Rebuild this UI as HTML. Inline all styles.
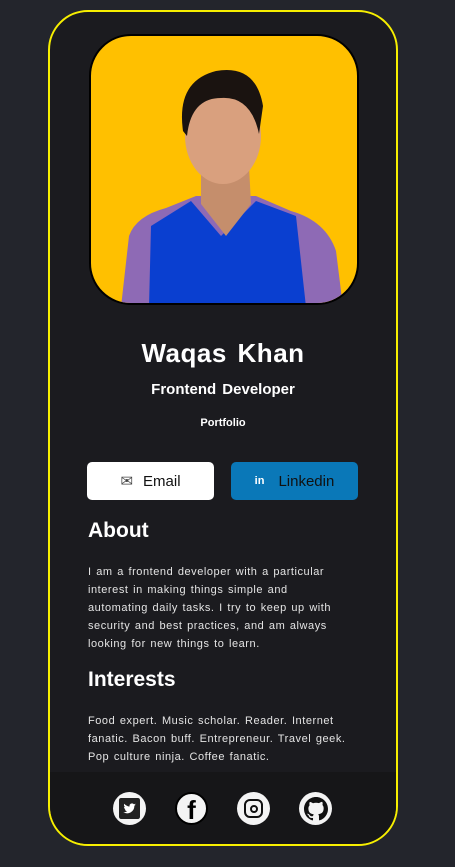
<!DOCTYPE html>
<html><head><meta charset="utf-8"><style>
*{margin:0;padding:0;box-sizing:border-box}
body{width:455px;height:867px;background:#23252c;font-family:"Liberation Sans","DejaVu Sans",sans-serif;position:relative;overflow:hidden}
.card{position:absolute;left:48px;top:10px;width:350px;height:836px;border:2px solid #f7ef00;border-radius:40px;background:#1b1b1f;overflow:hidden}
.foot{position:absolute;left:0;right:0;bottom:0;height:72px;background:#161618}
.photo{position:absolute;left:39px;top:22px;width:270px;height:271px;background:#ffc000;border:2px solid #000;border-radius:42px;overflow:hidden}
.t{position:absolute;left:0;width:346px;text-align:center;color:#fff;font-weight:bold}
.btn{position:absolute;top:450px;width:127px;height:38px;border-radius:5px;font-size:15px;display:flex;align-items:center;justify-content:center;color:#111}
h2{position:absolute;left:38px;color:#fff;font-size:21px;font-weight:bold}
p{position:absolute;left:38px;width:262px;color:#e4e4e4;font-size:11px;line-height:18px;letter-spacing:.55px;word-spacing:1px}
.ic{position:absolute;top:780px;width:33px;height:33px;border-radius:50%;background:#f4f4f4;display:flex;align-items:center;justify-content:center}
</style></head><body>
<div class="card">
<div class="photo">
<svg width="270" height="271" viewBox="0 0 270 271">
<path d="M30 271 L38 200 Q45 180 75 172 L105 160 L165 160 L200 175 Q235 185 245 215 L252 271Z" fill="#8e6ab5"/>
<path d="M58 271 L60 190 L100 165 L130 200 L165 165 L205 180 L215 271Z" fill="#0a3fd0"/>
<path d="M110 130 L110 168 L135 200 L160 168 L158 130Z" fill="#c58e6c"/>
<ellipse cx="132" cy="100" rx="38" ry="48" fill="#d9a07e"/>
<path d="M92 95 Q85 45 125 35 Q165 28 172 70 L168 98 Q160 60 130 62 Q100 62 96 100Z" fill="#1a1310"/>
</svg>
</div>
<div class="t" style="top:326px;font-size:26px;letter-spacing:.5px;word-spacing:3px">Waqas Khan</div>
<div class="t" style="top:369px;font-size:15px;word-spacing:2px">Frontend Developer</div>
<div class="t" style="top:405px;font-size:11px">Portfolio</div>
<div class="btn" style="left:37px;background:#fff"><span style="font-size:15px;margin-right:10px;color:#444">✉</span>Email</div>
<div class="btn" style="left:181px;background:#0a78b8"><b style="font-size:11px;color:#fff;margin-right:14px">in</b>Linkedin</div>
<h2 style="top:507px">About</h2>
<p style="top:551px">I am a frontend developer with a particular interest in making things simple and automating daily tasks. I try to keep up with security and best practices, and am always looking for new things to learn.</p>
<h2 style="top:656px">Interests</h2>
<p style="top:700px">Food expert. Music scholar. Reader. Internet fanatic. Bacon buff. Entrepreneur. Travel geek. Pop culture ninja. Coffee fanatic.</p>
<div class="foot"></div>
<div class="ic" style="left:63px"><svg width="21" height="21" viewBox="0 0 20 20"><rect width="20" height="20" rx="2" fill="#222"/><path fill="#fff" d="M16 6.2c-.4.2-.9.3-1.4.4.5-.3.9-.8 1.1-1.3-.5.3-1 .5-1.5.6a2.4 2.4 0 0 0-4.1 2.2c-2-.1-3.8-1.1-5-2.6-.7 1.1-.3 2.5.7 3.2-.4 0-.8-.1-1.1-.3 0 1.2.8 2.2 1.9 2.4-.4.1-.7.1-1.1 0 .3 1 1.2 1.7 2.3 1.7A4.8 4.8 0 0 1 4 13.5a6.9 6.9 0 0 0 10.6-6.1c.5-.3.9-.7 1.4-1.2z"/></svg></div>
<div class="ic" style="left:125px;border:2px solid #000"><b style="font-size:26px;color:#000;font-family:'Liberation Sans';margin-top:4px">f</b></div>
<div class="ic" style="left:187px"><div style="width:19px;height:19px;border:2.5px solid #111;border-radius:6px;display:flex;align-items:center;justify-content:center"><div style="width:8px;height:8px;border:2px solid #111;border-radius:50%"></div></div></div>
<div class="ic" style="left:249px"><svg width="24" height="24" viewBox="0 0 16 16"><path fill="#111" d="M8 0C3.58 0 0 3.58 0 8c0 3.540 2.29 6.53 5.47 7.59.4.07.55-.17.55-.38v-1.33c-2.230.48-2.7-1.07-2.7-1.07-.36-.93-.89-1.170-.89-1.17-.73-.5.06-.49.06-.49.8.06 1.23.83 1.23.83.72 1.22 1.87.87 2.33.66.07-.52.28-.87.51-1.07-1.78-.2-3.64-.89-3.64-3.95 0-.87.31-1.59.82-2.15-.08-.2-.36-1.02.08-2.12 0 0 .67-.21 2.2.82A7.6 7.6 0 018 3.8c.68 0 1.36.09 2 .27 1.53-1.04 2.2-.82 2.2-.82.44 1.1.16 1.92.08 2.12.51.56.82 1.27.82 2.15 0 3.07-1.87 3.75-3.65 3.95.29.25.54.73.54 1.48v2.2c0 .21.15.46.55.38A8 8 0 0016 8c0-4.42-3.58-8-8-8z"/></svg></div>
</div>
</body></html>
